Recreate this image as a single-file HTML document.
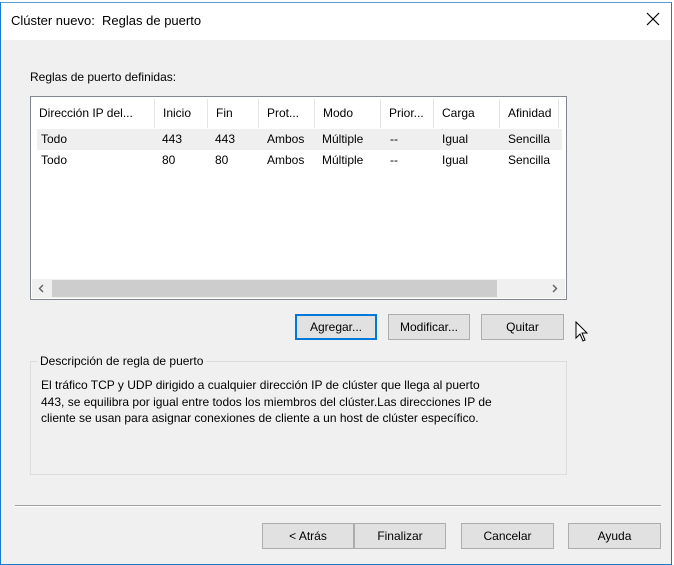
<!DOCTYPE html>
<html><head><style>
*{margin:0;padding:0;box-sizing:border-box}
body{width:674px;height:565px;overflow:hidden;background:#fff;font-family:"Liberation Sans",sans-serif;font-size:12px;color:#000;position:relative}
.win{position:absolute;left:0;top:2px;width:672px;height:563px;border:1px solid #1979ca;border-top:1px solid #5a9ad8;background:#f0f0f0}
.title{position:absolute;left:0;top:0;width:670px;height:37px;background:#fff}
.title span{position:absolute;left:10px;top:10px;font-size:13px}
.x{position:absolute;left:644px;top:8px}
.a{position:absolute;white-space:nowrap}
.list{position:absolute;left:29px;top:93px;width:537px;height:204px;background:#fff;border:1px solid #828790}
.hd{position:absolute;top:2px;height:29px;line-height:29px;padding-left:8px;border-right:1px solid #e5e5e5}
.row{position:absolute;left:6px;width:525px;height:21px;line-height:21px}
.row span{position:absolute;top:0}
.sb{position:absolute;left:1px;bottom:1px;width:533px;height:19px;background:#f0f0f0}
.btn{position:absolute;height:26px;border:1px solid #adadad;background:#e1e1e1;text-align:center;line-height:24px}
.grp{position:absolute;left:29px;top:358px;width:537px;height:114px;border:1px solid #dcdcdc}
</style></head><body>
<div class="win">
<div class="title"><span>Clúster nuevo:&nbsp; Reglas de puerto</span>
<svg class="x" width="16" height="16" viewBox="0 0 16 16"><path d="M2 2L14 14M14 2L2 14" stroke="#000" stroke-width="1.2"/></svg></div>
<div class="a" style="left:29px;top:67px">Reglas de puerto definidas:</div>
<div class="list">
<div class="hd" style="left:0;width:124px">Dirección IP del...</div>
<div class="hd" style="left:124px;width:53px">Inicio</div>
<div class="hd" style="left:177px;width:51px">Fin</div>
<div class="hd" style="left:228px;width:56px">Prot...</div>
<div class="hd" style="left:284px;width:66px">Modo</div>
<div class="hd" style="left:350px;width:53px">Prior...</div>
<div class="hd" style="left:403px;width:66px">Carga</div>
<div class="hd" style="left:469px;width:59px">Afinidad</div>
<div class="row" style="top:32px;background:#efefef"><span style="left:4px">Todo</span><span style="left:125px">443</span><span style="left:178px">443</span><span style="left:230px">Ambos</span><span style="left:285px">Múltiple</span><span style="left:353px">--</span><span style="left:405px">Igual</span><span style="left:471px">Sencilla</span></div>
<div class="row" style="top:53px"><span style="left:4px">Todo</span><span style="left:125px">80</span><span style="left:178px">80</span><span style="left:230px">Ambos</span><span style="left:285px">Múltiple</span><span style="left:353px">--</span><span style="left:405px">Igual</span><span style="left:471px">Sencilla</span></div>
<div class="sb"><div style="position:absolute;left:20px;top:1px;width:445px;height:17px;background:#cdcdcd"></div>
<svg class="a" style="left:6px;top:5px" width="6" height="9" viewBox="0 0 6 9"><path d="M5 1L1.5 4.5L5 8" stroke="#606060" stroke-width="1.4" fill="none"/></svg>
<svg class="a" style="left:520px;top:5px" width="6" height="9" viewBox="0 0 6 9"><path d="M1 1L4.5 4.5L1 8" stroke="#606060" stroke-width="1.4" fill="none"/></svg></div>
</div>
<div class="btn" style="left:294px;top:311px;width:82px;border:2px solid #0078d7;line-height:22px">Agregar...</div>
<div class="btn" style="left:387px;top:311px;width:82px">Modificar...</div>
<div class="btn" style="left:480px;top:311px;width:83px">Quitar</div>
<svg class="a" style="left:574px;top:318px" width="16" height="24" viewBox="0 0 16 24"><path d="M1 1L1 17L5 13L8 20L10 19L7 12L12 12Z" fill="#fff" stroke="#000"/></svg>
<div class="grp"></div>
<div class="a" style="left:36px;top:351px;background:#f0f0f0;padding:0 3px">Descripción de regla de puerto</div>
<div class="a" style="left:40px;top:374px;line-height:16.5px">El tráfico TCP y UDP dirigido a cualquier dirección IP de clúster que llega al puerto<br>443, se equilibra por igual entre todos los miembros del clúster.Las direcciones IP de<br>cliente se usan para asignar conexiones de cliente a un host de clúster específico.</div>
<div style="position:absolute;left:14px;top:502px;width:646px;height:1px;background:#a0a0a0"></div>
<div style="position:absolute;left:14px;top:503px;width:646px;height:1px;background:#fff"></div>
<div class="btn" style="left:261px;top:520px;width:92px">&lt; Atrás</div>
<div class="btn" style="left:353px;top:520px;width:92px">Finalizar</div>
<div class="btn" style="left:460px;top:520px;width:93px">Cancelar</div>
<div class="btn" style="left:567px;top:520px;width:93px">Ayuda</div>
</div>
</body></html>
